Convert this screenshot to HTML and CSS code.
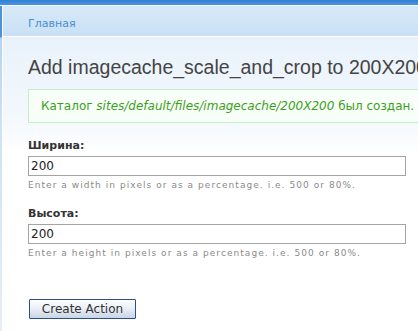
FILE: index.html
```html
<!DOCTYPE html>
<html>
<head>
<meta charset="utf-8">
<link rel="stylesheet" href="styles.css">
</head>
<body>
<div class="topbar"></div>
<div class="frame">
  <div class="side"></div>
  <div class="main">
    <div class="crumbs"><a href="#">Главная</a></div>
    <div class="content">
      <h1 class="title">Add imagecache_scale_and_crop to 200X200</h1>
      <div class="messages">Каталог <em>sites/default/files/imagecache/200X200</em> был создан.</div>
      <form class="form">
        <div class="form-item">
          <label class="label">Ширина:</label>
          <input class="text" type="text" value="200">
          <div class="desc">Enter a width in pixels or as a percentage. i.e. 500 or 80%.</div>
        </div>
        <div class="form-item">
          <label class="label">Высота:</label>
          <input class="text" type="text" value="200">
          <div class="desc">Enter a height in pixels or as a percentage. i.e. 500 or 80%.</div>
        </div>
        <button class="button" type="button">Create Action</button>
      </form>
    </div>
  </div>
</div>
</body>
</html>
```
FILE: styles.css
```css
html, body {
  margin: 0;
  padding: 0;
  background: #ffffff;
  overflow: hidden;
  height: 100%;
}
body {
  font-family: "DejaVu Sans", Verdana, sans-serif;
}
.topbar {
  height: 5px;
  background: linear-gradient(to bottom, #2f7fd6, #4a95de);
  border-bottom: 1px solid #ffffff;
}
.frame {
  display: flex;
  height: 325px;
}
.side {
  width: 2px;
  flex: none;
  border-right: 1px solid #ffffff;
  background: linear-gradient(to bottom, #4a93dc 0, #4a93dc 31px, #b8d3ee 32px, #cfe1f3 120px, #e6eff9 331px);
}
.main {
  flex: 1;
  min-width: 0;
  overflow: hidden;
  background: linear-gradient(to bottom, #e9f2fb 32px, #f3f8fd 110px, #ffffff 150px);
}
.crumbs {
  height: 31px;
  box-sizing: border-box;
  padding: 11px 0 0 25px;
  border-bottom: 1px solid #ffffff;
  background: linear-gradient(to bottom, #d6e9f8, #c9e0f5);
  font-size: 11px;
  line-height: 13px;
}
.crumbs a {
  color: #4a8fd3;
  text-decoration: none;
}
.content {
  padding: 19px 0 0 25px;
}
.title {
  margin: 0 0 10px;
  font-family: "Liberation Sans", Arial, sans-serif;
  font-weight: normal;
  font-size: 19.5px;
  line-height: 23px;
  color: #444444;
  white-space: nowrap;
}
.messages {
  width: 420px;
  box-sizing: border-box;
  border: 1px solid #c6eec6;
  background: #f8fff8;
  padding: 10px 0 9px 12px;
  font-size: 12px;
  line-height: 13px;
  color: #3d9e1e;
  white-space: nowrap;
}
.form {
  margin: 0;
  width: 378px;
}
.form-item {
  margin-top: 16px;
}
.label {
  display: block;
  font-weight: bold;
  font-size: 11px;
  line-height: 14px;
  color: #333333;
  margin-bottom: 3px;
}
.text {
  display: block;
  box-sizing: border-box;
  width: 378px;
  height: 20px;
  margin: 0;
  padding: 0 2px;
  border: 1px solid #a4a4a4;
  background: #ffffff;
  font-family: "DejaVu Sans", Verdana, sans-serif;
  font-size: 12px;
  color: #222222;
  outline: none;
}
.desc {
  margin-top: 3px;
  font-size: 9px;
  line-height: 12px;
  letter-spacing: 1.05px;
  color: #8a8a8a;
}
.button {
  display: block;
  margin: 40px 0 0 1px;
  height: 20px;
  width: 107px;
  box-sizing: border-box;
  padding: 0;
  border: 1px solid #2e4f82;
  border-radius: 1px;
  background: linear-gradient(to bottom, #fbfcfe 0, #eef2f8 40%, #c9d5e5 100%);
  font-family: "DejaVu Sans", Verdana, sans-serif;
  font-size: 12px;
  line-height: 18px;
  color: #333333;
}
```
